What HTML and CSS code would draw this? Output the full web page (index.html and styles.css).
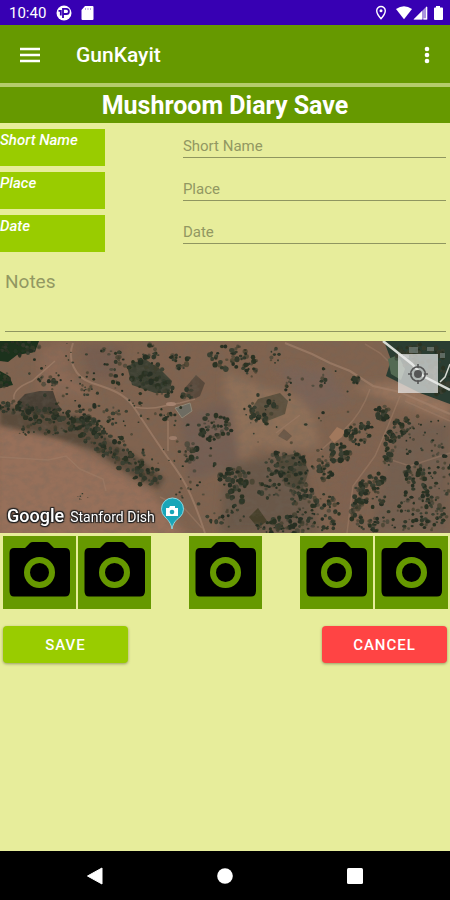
FILE: index.html
```html
<!DOCTYPE html>
<html lang="en">
<head>
<meta charset="utf-8">
<meta name="viewport" content="width=device-width, initial-scale=1">
<title>GunKayit</title>
<link rel="stylesheet" href="styles.css">
</head>
<body>
<div class="status">
  <span class="clock">10:40</span>
  <svg class="status-left" viewBox="0 0 42 18" width="42" height="18" aria-hidden="true">
    <circle cx="9" cy="9" r="7.500" fill="#fff"/>
    <path d="M8 14V4.800H11.300A2.600 2.600 0 0 1 11.300 10H8M3.500 6.800H5.800V11.500" fill="none" stroke="#3700b3" stroke-width="1.800"/>
    <path d="M30 2h7.500a1 1 0 0 1 1 1v12a1 1 0 0 1-1 1h-10a1 1 0 0 1-1-1V6z" fill="#fff"/>
    <path d="M30.500 4v2M33 4v2M35.500 4v2" stroke="#b9a5e4" stroke-width="1"/>
  </svg>
  <svg class="status-right" viewBox="0 0 68 18" width="68" height="18" aria-hidden="true">
    <path d="M5 2.500a4.300 4.300 0 0 0-4.300 4.300C.7 10 5 14.800 5 14.800s4.300-4.800 4.300-8A4.300 4.300 0 0 0 5 2.500z" fill="none" stroke="#fff" stroke-width="1.400"/>
    <circle cx="5" cy="6.700" r="1.500" fill="#fff"/>
    <path d="M20 5Q28-.5 36 5L28 15.300z" fill="#fff"/>
    <path d="M37.500 15.500 51 2v13.500z" fill="#a991dd"/>
    <path d="M37.500 15.500 46 7v8.500zM50 3h1.300v12.500H47.500v-1.300H50z" fill="#fff"/>
    <path d="M60 2h4v1.500h2a1 1 0 0 1 1 1V15a1 1 0 0 1-1 1h-7a1 1 0 0 1-1-1V4.500a1 1 0 0 1 1-1h1z" fill="#fff"/>
  </svg>
</div>
<header class="appbar">
  <button class="icon-button" type="button" aria-label="Open menu">
    <svg viewBox="0 0 20 16" width="20" height="16"><path d="M0 2h20M0 8h20M0 14h20" stroke="#fff" stroke-width="2.400"/></svg>
  </button>
  <h1 class="app-name">GunKayit</h1>
  <button class="icon-button" type="button" aria-label="More options">
    <svg viewBox="0 0 6 18" width="6" height="18" fill="#fff"><circle cx="3" cy="3" r="2.300"/><circle cx="3" cy="9" r="2.300"/><circle cx="3" cy="15" r="2.300"/></svg>
  </button>
</header>
<main>
  <h2 class="title">Mushroom Diary Save</h2>
  <form class="form">
    <div class="field">
      <label for="short-name">Short Name</label>
      <input id="short-name" type="text" placeholder="Short Name">
    </div>
    <div class="field">
      <label for="place">Place</label>
      <input id="place" type="text" placeholder="Place">
    </div>
    <div class="field">
      <label for="date">Date</label>
      <input id="date" type="text" placeholder="Date">
    </div>
    <textarea class="notes" aria-label="Notes" placeholder="Notes"></textarea>
    <div class="map">
      <svg id="terrain" viewBox="0 0 450 192" preserveAspectRatio="xMidYMid slice" role="img" aria-label="Satellite map">
        <defs>
          <filter id="soft" x="-30%" y="-30%" width="160%" height="160%"><feGaussianBlur stdDeviation="4"/></filter>
          <filter id="edge"><feGaussianBlur stdDeviation="0.600"/></filter>
          <filter id="shade"><feGaussianBlur stdDeviation="2"/></filter>
          <filter id="grain" x="0" y="0" width="100%" height="100%">
            <feTurbulence type="fractalNoise" baseFrequency="0.120 0.160" numOctaves="4" seed="8"/>
            <feColorMatrix values="0 0 0 0 0.160  0 0 0 0 0.140  0 0 0 0 0.110  1.800 0 0 0 -0.720"/>
          </filter>
        </defs>
        <rect width="450" height="192" fill="#80634f"/>
        <g filter="url(#soft)">
          <path d="M-5 85 60 98 100 120 150 150 190 200H-5z" fill="#97705a"/>
          <path d="M40 10 70 0 68 30 100 60 40 50z" fill="#8b6954"/>
          <path d="M80 5h45l-10 35-25-5z" fill="#775d50"/>
          <path d="M225 30 260 45 310 60 320 105 290 110 260 105 225 130z" fill="#8f6f59"/>
          <path d="M275 25 330 30 350 60 310 70z" fill="#7c6456"/>
          <path d="M350 45 450 80V60L400 42z" fill="#98745d"/>
          <path d="M395 85 450 80V192H370z" fill="#745e50"/>
          <path d="M180 75 230 60 240 120 190 140z" fill="#765f53"/>
          <path d="M340 125 380 100 360 160 330 192z" fill="#80624f"/>
          <path d="M225 125 300 110 320 192H220z" fill="#6b594a"/>
        </g>
        <path d="M0 64 45 70 85 76 110 98 140 118 165 138 158 148 130 134 95 110 60 98 0 84z" fill="#554738" opacity="0.850" filter="url(#shade)"/>
        <g fill="#493f35" filter="url(#edge)">
          <path d="M18 60 25 53 40 50 53 50 57 62 62 69 40 74 18 67z"/>
          <path d="M127 25 145 18 160 28 172 40 169 52 155 52 132 44z" fill="#3e4032"/>
          <path d="M185 47 196 34 205 42 200 55 190 60z" opacity="0.700"/>
          <path d="M250 70 258 58 280 52 288 60 285 73 265 81z" fill="#514b37" opacity="0.800"/>
          <path d="M278 95 284 88 292 95 287 100z" opacity="0.500"/>
          <path d="M276 116 300 112 309 130 302 150 285 145z" fill="#4b4634" opacity="0.800"/>
          <path d="M249 176 258 167 267 180 258 187z" fill="#473f2a"/>
        </g>
        <rect width="450" height="192" filter="url(#grain)" opacity="0.350"/>
        <g fill="none" stroke="#a1806a" stroke-width="1.500" opacity="0.700" filter="url(#edge)">
          <path d="M73 2C67 18 74 36 92 42S124 52 133 65 155 99 168 117 189 144 205 192" stroke-width="2"/>
          <path d="M134 66Q150 69 164 65L180 62 195 58M168 80V110M14 58Q12 48 32 40L55 20"/>
          <path d="M0 116 48 119 66 115 80 128 103 138 106 150" opacity="0.700"/>
          <path d="M285 2 312 13 330 22 350 30 373 45 400 51 450 73" stroke-width="2.200"/>
          <path d="M370 48Q362 72 345 88L320 110M400 55 388 85 375 115 353 145 347 192M276 92 300 74M160 156 185 168 202 187" opacity="0.700"/>
          <path d="M365 3 380 12 388 20M405 60 450 80M385 117 410 125 450 112" opacity="0.600"/>
        </g>
        <g filter="url(#edge)">
          <path d="M0 0H39L35 11 17 14 8 21 0 20zM0 30 9 35 13 44 4 46H0z" fill="#1c301f"/>
          <path d="M384 0H450V63L420 52 386 35 391 19z" fill="#2b3c31"/>
          <path d="M388 18 398 14 405 28 401 39 391 33z" fill="#536b53"/>
          <path d="M175 67 190 62 192 70 182 77z" fill="#6e6c62" stroke="#8f8775"/>
          <path d="M329 96 337 86 345 90 342 96 334 102z" fill="#a1785c"/>
          <ellipse cx="171" cy="63" rx="5" ry="2" fill="#a5836f"/>
          <ellipse cx="173" cy="97" rx="4" ry="2" fill="#9d7c69"/>
        </g>
        <g id="trees" filter="url(#edge)"></g>
        <path d="M409 6h9v6h-9zM427 6h7v4h-7zM404 14h5v3h-5zM440 12h5v5h-5z" fill="#77807a" opacity="0.700" filter="url(#edge)"/>
        <g fill="none" stroke="#d7dbd4" stroke-width="2.500">
          <path d="M383 0 412 23 423 35 450 49"/>
          <path d="M440 41 445 36 450 23" stroke-width="1.500"/>
        </g>
        <g transform="translate(172 188)">
          <path d="M0 0C-1-6-4-9-7-12A11 11 0 1 1 8-12C4-9 1-6 0 0z" fill="#19a5b8" stroke="#8ed6df" stroke-width="1"/>
          <path d="M-6-21h3l1-2H3v2h3v8H-6z" fill="#fff"/>
          <circle cx="0" cy="-17" r="2.300" fill="#19a5b8"/>
        </g>
      </svg>
      <div class="map-caption"><span class="brand">Google</span><span class="spot">Stanford Dish</span></div>
      <button class="locate" type="button" aria-label="My location">
        <svg viewBox="0 0 22 22" width="22" height="22"><circle cx="11" cy="11" r="7.300" fill="none" stroke="#555" stroke-width="1.600"/><circle cx="11" cy="11" r="4" fill="#555"/><path d="M11 1v4M11 17v4M1 11h4M17 11h4" stroke="#555" stroke-width="1.600"/></svg>
      </button>
    </div>
    <svg width="0" height="0" class="sprite" aria-hidden="true">
      <symbol id="camera" viewBox="0 0 73 73">
        <path d="M11 12H22L27 7Q28 6 30 6H43Q45 6 46 7L51 12H62Q67 12 67 17V55Q67 60.500 62 60.500H11Q6.500 60.500 6.500 55V17Q6.500 12 11 12z"/>
        <circle cx="36.500" cy="36.500" r="12.500" fill="none" stroke="#690" stroke-width="6"/>
      </symbol>
    </svg>
    <div class="photos">
      <div class="photo-group">
        <button class="photo" type="button" aria-label="Add photo 1"><svg><use href="#camera"/></svg></button>
        <button class="photo" type="button" aria-label="Add photo 2"><svg><use href="#camera"/></svg></button>
      </div>
      <button class="photo" type="button" aria-label="Add photo 3"><svg><use href="#camera"/></svg></button>
      <div class="photo-group">
        <button class="photo" type="button" aria-label="Add photo 4"><svg><use href="#camera"/></svg></button>
        <button class="photo" type="button" aria-label="Add photo 5"><svg><use href="#camera"/></svg></button>
      </div>
    </div>
    <div class="actions">
      <button class="action save" type="button">SAVE</button>
      <button class="action cancel" type="button">CANCEL</button>
    </div>
  </form>
</main>
<nav class="navbar" aria-label="System">
  <button type="button" aria-label="Back"><svg viewBox="0 0 18 18" width="18" height="18"><path d="M1.500 9 16 1v16z" fill="#fff" stroke="#fff" stroke-linejoin="round"/></svg></button>
  <button type="button" aria-label="Home"><svg viewBox="0 0 18 18" width="18" height="18"><circle cx="9" cy="9" r="7.800" fill="#fff"/></svg></button>
  <button type="button" aria-label="Recents"><svg viewBox="0 0 18 18" width="18" height="18"><rect x="1" y="1" width="16" height="16" rx="1.500" fill="#fff"/></svg></button>
</nav>
<script src="map.js"></script>
</body>
</html>
```
FILE: styles.css
```css
* { box-sizing: border-box; }
body {
  margin: 0;
  min-height: 100vh;
  display: flex;
  flex-direction: column;
  background: #e7ed9b;
  font-family: Roboto, "Liberation Sans", sans-serif;
  color: #fff;
}
button { border: 0; padding: 0; background: none; font: inherit; color: inherit; }
svg { display: block; }
.status {
  height: 25px;
  display: flex;
  align-items: center;
  padding: 1px 6px 0 9px;
  background: #3700b3;
}
.clock { font-size: 15px; }
.status-left { margin-left: 9px; }
.status-right { margin-left: auto; }
.appbar {
  height: 58px;
  display: flex;
  align-items: center;
  padding: 2px 10px 0;
  background: #690;
}
.icon-button { width: 40px; height: 40px; display: grid; place-items: center; }
.icon-button:last-child { width: 26px; }
.app-name { flex: 1; margin: 0 0 0 26px; font-size: 21px; line-height: 28px; font-weight: 500; }
main { flex: 1; }
.title {
  margin: 0;
  padding-top: 2px;
  border-top: 4px solid #b5cc6c;
  background: #690;
  font-size: 25px;
  line-height: 34px;
  font-weight: 700;
  text-align: center;
}
.form { display: flex; flex-direction: column; padding-top: 6px; }
.field { display: flex; justify-content: space-between; margin-bottom: 6px; padding-right: 4px; }
.field label {
  width: 105px;
  height: 37px;
  background: #9c0;
  font-size: 15px;
  line-height: 22px;
  font-weight: 500;
  font-style: italic;
}
input, textarea {
  border: 0;
  border-bottom: 1px solid #8f9660;
  border-radius: 0;
  outline: 0;
  padding: 0;
  background: none;
  font-family: inherit;
  color: #333;
}
.field input { width: 59%; height: 29px; padding-top: 6px; font-size: 15px; }
::placeholder { color: #929862; opacity: 1; }
.notes { height: 64px; margin: 10px 4px 9px 5px; padding-top: 2px; font-size: 19px; line-height: 24px; resize: none; }
.map { position: relative; height: 192px; overflow: hidden; }
#terrain { width: 100%; height: 100%; }
.map-caption {
  position: absolute;
  left: 7px;
  bottom: 4px;
  display: flex;
  align-items: baseline;
  gap: 6px;
  line-height: 24px;
  text-shadow: 0 0 2px #222, 1px 1px 1px #222, -1px -1px 1px #222, 1px -1px 1px #222, -1px 1px 1px #222;
}
.brand { font-size: 18px; font-weight: 500; }
.spot { font-size: 14px; }
.locate {
  position: absolute;
  top: 13px;
  right: 12px;
  width: 40px;
  height: 39px;
  display: grid;
  place-items: center;
  background: rgba(235, 235, 235, 0.7);
}
.sprite { position: absolute; }
.photos { display: flex; justify-content: space-between; padding: 3px 2px 0 3px; }
.photo-group { display: flex; gap: 2px; }
.photo { width: 73px; height: 73px; background: #690; }
.photo svg { width: 100%; height: 100%; }
.actions { display: flex; justify-content: space-between; padding: 17px 3px; }
.action {
  width: 125px;
  height: 37px;
  border-radius: 4px;
  box-shadow: 0 1px 3px rgba(0, 0, 0, 0.35);
  font-size: 15px;
  font-weight: 500;
  letter-spacing: 1px;
}
.save { background: #9c0; }
.cancel { background: #f44; }
.navbar {
  height: 49px;
  display: flex;
  justify-content: center;
  align-items: center;
  gap: 82px;
  background: #000;
}
.navbar button { width: 48px; height: 48px; display: grid; place-items: center; }
```
FILE: map.js
```js
// Scatters tree canopies over the terrain. Each grove: x, y, radius x, radius y, count, crown size.
const groves = [
  [20, 7, 20, 7, 30, 2], [4, 39, 7, 8, 14, 2], [47, 40, 10, 5, 16, 2], [88, 50, 7, 5, 8, 1.8],
  [15, 66, 18, 6, 35, 2.2], [45, 74, 22, 8, 48, 2.5], [75, 78, 18, 11, 42, 2.5], [40, 88, 30, 7, 28, 1.8],
  [92, 90, 13, 12, 32, 2.5], [108, 104, 17, 13, 38, 2.4], [130, 121, 16, 11, 35, 2.3], [148, 135, 14, 10, 28, 2.2],
  [103, 73, 16, 13, 18, 2], [119, 30, 9, 20, 22, 2], [145, 33, 18, 17, 42, 2.4], [165, 47, 8, 8, 20, 2.4],
  [151, 11, 13, 7, 14, 2], [106, 15, 6, 9, 8, 2], [180, 20, 11, 9, 18, 2.2], [187, 50, 7, 10, 14, 2.2],
  [168, 73, 8, 6, 10, 2.2], [214, 85, 18, 15, 45, 2.3], [190, 112, 9, 10, 20, 2.3],
  [234, 16, 25, 13, 46, 2.3], [252, 28, 7, 9, 14, 2], [236, 138, 18, 11, 42, 2.5],
  [235, 158, 9, 9, 14, 2.4], [264, 70, 16, 13, 32, 2.1], [276, 16, 6, 9, 9, 1.8], [289, 44, 4, 11, 10, 1.6],
  [324, 40, 4, 7, 6, 1.8], [357, 39, 5, 4, 12, 2], [382, 72, 8, 7, 28, 2.3], [360, 92, 15, 12, 42, 2.2],
  [339, 112, 12, 10, 32, 2.4], [323, 127, 11, 12, 32, 2.4], [288, 123, 25, 13, 58, 2.2], [281, 145, 24, 16, 48, 2],
  [305, 160, 12, 22, 38, 2.1], [325, 171, 15, 20, 42, 2], [290, 183, 24, 10, 42, 2.2],
  [270, 186, 15, 6, 20, 2], [376, 140, 9, 8, 23, 2.3], [361, 152, 7, 13, 33, 2.3], [358, 172, 7, 14, 24, 2.3],
  [374, 183, 14, 9, 24, 2.2], [375, 159, 11, 12, 18, 2], [402, 84, 8, 9, 22, 2.3], [390, 102, 6, 12, 20, 2.4],
  [389, 119, 6, 6, 12, 2.4], [415, 133, 12, 11, 32, 2.2], [420, 155, 18, 12, 32, 2], [432, 175, 17, 14, 35, 2.1],
  [402, 174, 15, 16, 22, 1.8], [440, 135, 12, 30, 30, 1.7], [420, 95, 30, 20, 35, 1.5],
  [418, 14, 27, 12, 60, 2.6], [436, 38, 14, 15, 40, 2.6],
  [153, 85, 38, 50, 35, 1.5], [205, 145, 35, 42, 32, 1.7], [300, 70, 60, 50, 26, 1.6], [60, 25, 45, 25, 20, 1.3],
  [100, 60, 60, 28, 30, 1.5], [225, 175, 20, 15, 22, 1.7], [86, 155, 12, 5, 6, 1]
];
const tones = ["#262f23", "#2d362780", "#30382a", "#3a3f30", "#2b3323", "#3f3d2daa"];
const layer = document.getElementById("trees");
let seed = 41;
function random() {
  seed = (seed * 16807) % 2147483647;
  return seed / 2147483647;
}
for (const [x, y, rx, ry, count, size] of groves) {
  for (let i = 0; i < count; i++) {
    const angle = random() * Math.PI * 2;
    const reach = Math.sqrt(random());
    const crown = document.createElementNS("http://www.w3.org/2000/svg", "ellipse");
    const r = size * (0.45 + random() * 0.75);
    crown.setAttribute("cx", x + Math.cos(angle) * reach * rx);
    crown.setAttribute("cy", y + Math.sin(angle) * reach * ry);
    crown.setAttribute("rx", r);
    crown.setAttribute("ry", r * (0.7 + random() * 0.5));
    crown.setAttribute("fill", tones[Math.floor(random() * tones.length)]);
    layer.appendChild(crown);
  }
}
```
